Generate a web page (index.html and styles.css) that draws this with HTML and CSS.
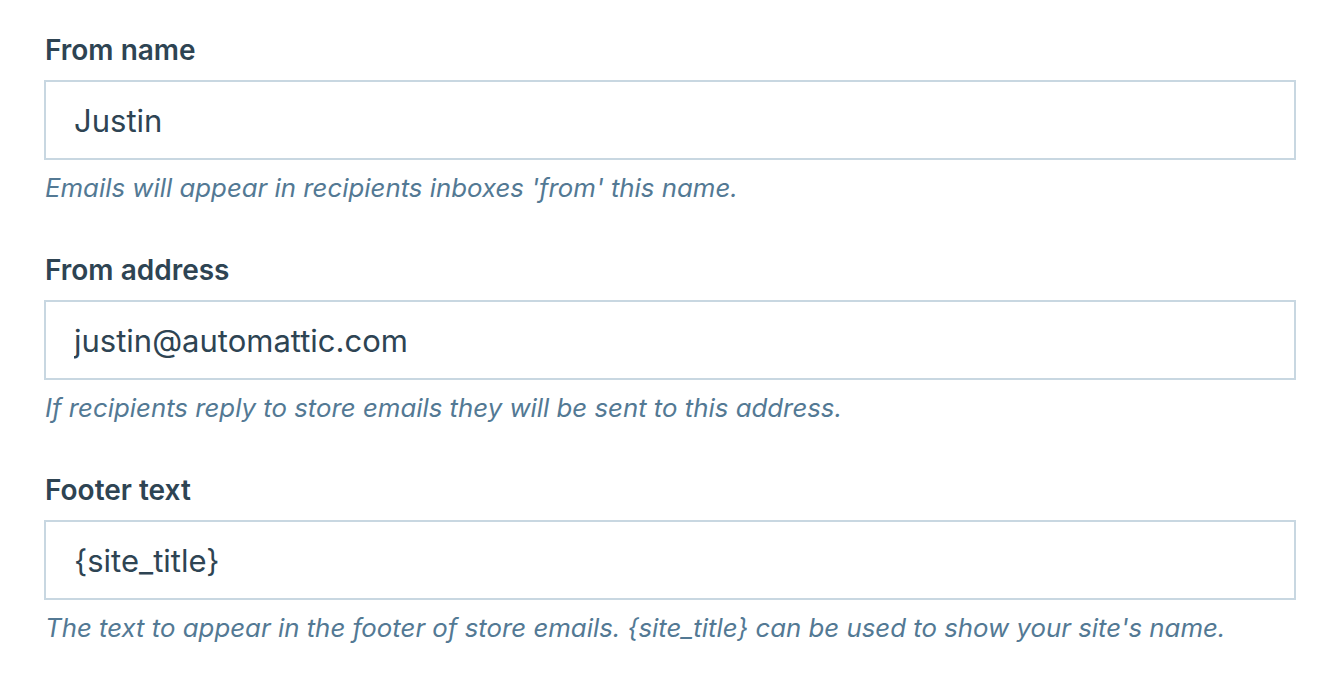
FILE: index.html
```
<!DOCTYPE html>
<html lang="en">
<head>
  <meta charset="UTF-8">
  <title>Email settings</title>
  <link rel="stylesheet" href="styles.css">
</head>
<body>
  <form class="settings">
    <div class="field">
      <label class="field-label" for="from-name">From name</label>
      <input class="field-input" id="from-name" type="text" value="Justin">
      <p class="field-help">Emails will appear in recipients inboxes 'from' this name.</p>
    </div>
    <div class="field">
      <label class="field-label" for="from-address">From address</label>
      <input class="field-input" id="from-address" type="text" value="justin@automattic.com">
      <p class="field-help">If recipients reply to store emails they will be sent to this address.</p>
    </div>
    <div class="field">
      <label class="field-label" for="footer-text">Footer text</label>
      <input class="field-input" id="footer-text" type="text" value="{site_title}">
      <p class="field-help">The text to appear in the footer of store emails. {site_title} can be used to show your site's name.</p>
    </div>
  </form>
</body>
</html>
```

FILE: styles.css
```
:root {
  --text-color: #2e4453;
  --help-color: #537994;
  --border-color: #c8d7e1;
}

body {
  margin: 0;
  background-color: #fff;
  color: var(--text-color);
  font-family: Inter, "Noto Sans", sans-serif;
}

.settings {
  padding: 30px 36px 0 44px;
}

.field {
  margin-bottom: 42px;
}

.field-label {
  display: block;
  font-size: 28px;
  font-weight: 600;
  line-height: 40px;
  margin-bottom: 10px;
  padding-left: 1px;
}

.field-input {
  display: block;
  box-sizing: border-box;
  width: 100%;
  height: 80px;
  margin: 0;
  padding: 0 28px;
  border: 2px solid var(--border-color);
  border-radius: 0;
  font-family: inherit;
  font-size: 31px;
  color: var(--text-color);
  background-color: #fff;
}

.field-help {
  margin: 8px 0 0;
  padding-left: 1px;
  font-size: 25.8px;
  font-style: italic;
  line-height: 40px;
  color: var(--help-color);
}
```
